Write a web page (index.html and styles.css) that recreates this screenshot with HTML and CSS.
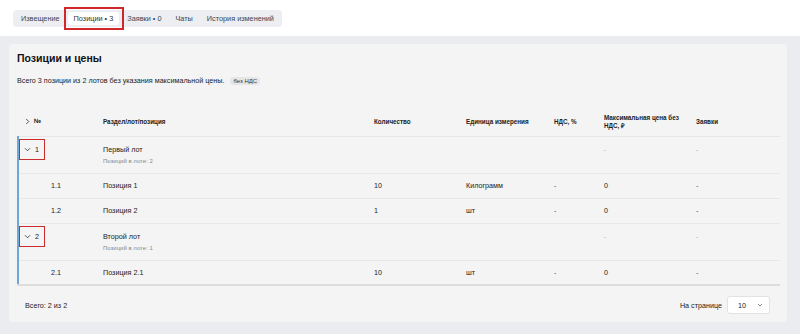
FILE: index.html
```html
<!DOCTYPE html>
<html lang="ru">
<head>
<meta charset="utf-8">
<link rel="stylesheet" href="styles.css">
</head>
<body>
<header class="topbar">
  <nav class="tabs">
    <span class="tab">Извещение</span>
    <span class="tab active marked">Позиции • 3</span>
    <span class="tab">Заявки • 0</span>
    <span class="tab">Чаты</span>
    <span class="tab">История изменений</span>
  </nav>
</header>
<main class="page">
  <section class="card">
    <h1 class="title">Позиции и цены</h1>
    <p class="desc">Всего 3 позиции из 2 лотов без указания максимальной цены. <span class="badge">без НДС</span></p>
    <table class="grid">
      <colgroup>
        <col class="c1"><col class="c2"><col class="c3"><col class="c4"><col class="c5"><col class="c6"><col class="c7">
      </colgroup>
      <thead>
        <tr>
          <th class="num"><span class="toggle"><svg class="chev" viewBox="0 0 6 8" width="5" height="7"><path d="M1.5 1 L4.5 4 L1.5 7" fill="none" stroke="#333" stroke-width="1"/></svg>№</span></th>
          <th>Раздел/лот/позиция</th>
          <th>Количество</th>
          <th>Единица измерения</th>
          <th>НДС, %</th>
          <th>Максимальная цена без НДС, ₽</th>
          <th>Заявки</th>
        </tr>
      </thead>
      <tbody>
        <tr class="lot">
          <td class="num"><span class="toggle marked"><svg class="chev" viewBox="0 0 8 6" width="7" height="5"><path d="M1 1.5 L4 4.5 L7 1.5" fill="none" stroke="#333" stroke-width="1"/></svg>1</span></td>
          <td><div>Первый лот</div><div class="sub">Позиций в лоте: 2</div></td>
          <td></td><td></td><td></td>
          <td><span class="dash">-</span></td>
          <td><span class="dash">-</span></td>
        </tr>
        <tr class="pos">
          <td class="num sub-num">1.1</td>
          <td>Позиция 1</td>
          <td>10</td>
          <td>Килограмм</td>
          <td class="dashcell">-</td>
          <td>0</td>
          <td class="dashcell">-</td>
        </tr>
        <tr class="pos">
          <td class="num sub-num">1.2</td>
          <td>Позиция 2</td>
          <td>1</td>
          <td>шт</td>
          <td class="dashcell">-</td>
          <td>0</td>
          <td class="dashcell">-</td>
        </tr>
        <tr class="lot">
          <td class="num"><span class="toggle marked"><svg class="chev" viewBox="0 0 8 6" width="7" height="5"><path d="M1 1.5 L4 4.5 L7 1.5" fill="none" stroke="#333" stroke-width="1"/></svg>2</span></td>
          <td><div>Второй лот</div><div class="sub">Позиций в лоте: 1</div></td>
          <td></td><td></td><td></td>
          <td><span class="dash">-</span></td>
          <td><span class="dash">-</span></td>
        </tr>
        <tr class="pos last">
          <td class="num sub-num">2.1</td>
          <td>Позиция 2.1</td>
          <td>10</td>
          <td>шт</td>
          <td class="dashcell">-</td>
          <td>0</td>
          <td class="dashcell">-</td>
        </tr>
      </tbody>
    </table>
    <footer class="foot">
      <span class="total">Всего: 2 из 2</span>
      <div class="pager">
        <span class="pager-label">На странице</span>
        <span class="select">10<svg viewBox="0 0 8 6" width="6" height="4"><path d="M1 1.5 L4 4.5 L7 1.5" fill="none" stroke="#555" stroke-width="1"/></svg></span>
      </div>
    </footer>
  </section>
</main>
</body>
</html>
```
FILE: styles.css
```css
* { box-sizing: border-box; }
html, body { margin: 0; padding: 0; }
body {
  font-family: "Liberation Sans", Arial, sans-serif;
  color: #222;
  background: #ebecf0;
  height: 334px;
  overflow: hidden;
}
.topbar {
  background: #ffffff;
  height: 36px;
  padding: 7px 0 0 13px;
}
.tabs {
  display: inline-flex;
  gap: 2px;
  padding: 2px;
  background: #eceef1;
  border-radius: 4px;
  height: 17px;
}
.tab {
  position: relative;
  display: flex;
  align-items: center;
  padding: 0 6px;
  height: 13px;
  font-size: 7.3px;
  color: #3b4656;
  border-radius: 3px;
  white-space: nowrap;
}
.tab.active {
  background: #ffffff;
  color: #333;
}
.marked::after {
  content: "";
  position: absolute;
  border-style: solid;
  border-width: 1.5px;
  border-color: #cc2b2b;
  pointer-events: none;
}
.tab.marked::after {
  left: -4px; right: -5px; top: -5px; bottom: -5px;
  border-width: 2px;
  border-color: #d0282a;
}
.page {
  padding: 8px 13px 0 9px;
}
.card {
  background: #f4f4f4;
  border-radius: 4px;
  padding: 8px 8px 8px 8px;
  height: 278px;
}
.title {
  margin: 0;
  font-size: 10.5px;
  line-height: 13px;
  font-weight: bold;
  color: #111;
}
.desc {
  margin: 11px 0 0;
  font-size: 7.2px;
  line-height: 9px;
  color: #222;
}
.badge {
  display: inline-block;
  margin-left: 4px;
  padding: 0 3px;
  background: #e6e6e6;
  border-radius: 5px;
  font-size: 6px;
  line-height: 8px;
  color: #333;
}
.grid {
  margin-top: 23px;
  width: 762px;
  border-collapse: collapse;
  table-layout: fixed;
  font-size: 7.2px;
}
.c1 { width: 85px; }
.c2 { width: 271px; }
.c3 { width: 92px; }
.c4 { width: 88px; }
.c5 { width: 50px; }
.c6 { width: 92px; }
.c7 { width: 84px; }
th {
  height: 28px;
  text-align: left;
  font-size: 6.3px;
  line-height: 8px;
  font-weight: bold;
  padding: 0 10px 0 0;
  color: #222;
  border-bottom: 1px solid #e6e6e6;
  vertical-align: middle;
}
td {
  padding: 0 8px 0 0;
  vertical-align: middle;
  border-bottom: 1px solid #e8e8e8;
  color: #222;
}
tbody tr td:first-child { border-left: 2px solid #6ea8d8; }
th.num { padding-left: 7px; }
td.num { padding-left: 5px; }
.toggle {
  position: relative;
  display: inline-flex;
  align-items: center;
  gap: 4px;
}
.toggle .chev { display: block; }
tr.lot td { height: 37px; vertical-align: top; padding-top: 8px; }
tr.lot td.num { padding-top: 8px; }
tr.lot .toggle.marked::after { left: -5px; right: -6px; top: -6px; bottom: -6px; }
.sub { font-size: 6px; color: #888; margin-top: 4px; }
.dash { color: #888; font-size: 6px; }
tr.pos td { height: 25px; }
td.sub-num { padding-left: 32px; }
.dashcell { color: #555; }
tr.last td { border-bottom: 2px solid #dcdcdc; }
.foot {
  display: flex;
  justify-content: space-between;
  align-items: center;
  padding: 10px 9px 0 8px;
}
.total { font-size: 7.2px; }
.pager {
  display: flex;
  align-items: center;
  gap: 5px;
  font-size: 7.2px;
}
.select {
  display: flex;
  align-items: center;
  justify-content: space-between;
  width: 43px;
  height: 18px;
  padding: 0 6px 0 10px;
  background: #fff;
  border: 1px solid #e2e2e2;
  border-radius: 3px;
}
```
